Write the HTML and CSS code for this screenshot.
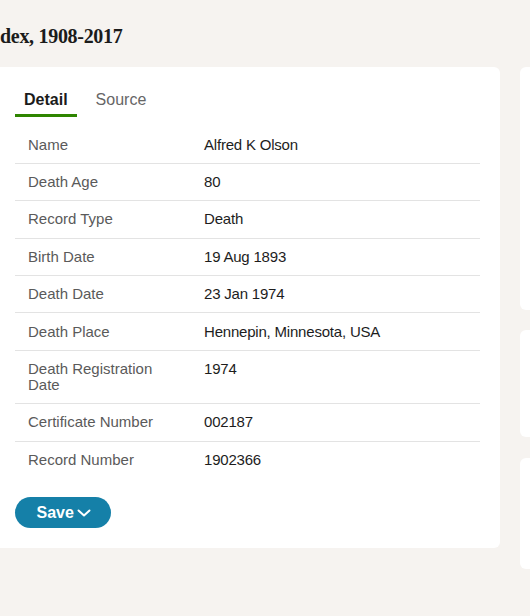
FILE: index.html
```html
<!DOCTYPE html>
<html>
<head>
<meta charset="utf-8">
<link rel="stylesheet" href="styles.css">
</head>
<body>
<header class="head">
  <h1 class="title">dex, 1908-2017</h1>
</header>
<div class="page">
  <main class="card">
    <nav class="tabs">
      <span class="tab active">Detail</span>
      <span class="tab">Source</span>
    </nav>
    <div class="table">
      <div class="row"><div class="label">Name</div><div class="value">Alfred K Olson</div></div>
      <div class="row"><div class="label">Death Age</div><div class="value">80</div></div>
      <div class="row"><div class="label">Record Type</div><div class="value">Death</div></div>
      <div class="row"><div class="label">Birth Date</div><div class="value">19 Aug 1893</div></div>
      <div class="row"><div class="label">Death Date</div><div class="value">23 Jan 1974</div></div>
      <div class="row"><div class="label">Death Place</div><div class="value">Hennepin, Minnesota, USA</div></div>
      <div class="row"><div class="label">Death Registration Date</div><div class="value">1974</div></div>
      <div class="row"><div class="label">Certificate Number</div><div class="value">002187</div></div>
      <div class="row"><div class="label">Record Number</div><div class="value">1902366</div></div>
    </div>
    <button class="save">Save<svg class="chev" width="14" height="8" viewBox="0 0 14 8"><path d="M1.5 1.5 L7 6.5 L12.5 1.5" fill="none" stroke="#fff" stroke-width="2" stroke-linecap="round" stroke-linejoin="round"/></svg></button>
  </main>
  <aside class="side">
    <div class="scard s1"></div>
    <div class="scard s2"></div>
    <div class="scard s3"></div>
  </aside>
</div>
<footer class="foot"></footer>
</body>
</html>
```
FILE: styles.css
```css
html, body {
  margin: 0;
  padding: 0;
  overflow: hidden;
  height: 616px;
}
body {
  background: #f6f3f0;
  font-family: "Liberation Sans", Arial, sans-serif;
  color: #1d1d1d;
}
.head {
  height: 67px;
  box-sizing: border-box;
  padding-top: 24px;
}
.title {
  margin: 0;
  font-family: "Liberation Serif", "Times New Roman", serif;
  font-weight: bold;
  font-size: 20px;
  line-height: 24px;
  letter-spacing: -0.3px;
  color: #1b1b1b;
}
.page {
  display: flex;
  gap: 20px;
  margin-left: -20px;
  align-items: flex-start;
  width: 800px;
}
.card {
  flex: 0 0 520px;
  box-sizing: border-box;
  background: #fff;
  border-radius: 6px;
  padding: 22.5px 20px 20px 35px;
}
.tabs {
  display: flex;
  gap: 10px;
}
.tab {
  font-size: 16px;
  line-height: 20px;
  padding: 0 9px 4.5px;
  border-bottom: 3px solid transparent;
  color: #666;
}
.tab.active {
  font-weight: bold;
  color: #1b1b1b;
  border-bottom-color: #2e8500;
}
.table {
  margin-top: 9.5px;
}
.row {
  display: grid;
  grid-template-columns: 189px 1fr;
  padding: 10.2px 0;
  border-bottom: 1px solid #e3e3e3;
  font-size: 15px;
  line-height: 16px;
}
.row:last-child {
  border-bottom: none;
}
.label {
  padding-left: 13px;
  padding-right: 20px;
  color: #5a5a5a;
}
.value {
  color: #1d1d1d;
  letter-spacing: -0.2px;
}
.save {
  margin-top: 19.5px;
  display: inline-flex;
  align-items: center;
  height: 31px;
  padding: 0 20px 0 21.5px;
  border: none;
  border-radius: 16px;
  background: #1580a8;
  color: #fff;
  font-family: "Liberation Sans", Arial, sans-serif;
  font-weight: bold;
  font-size: 16px;
}
.chev {
  margin-left: 3px;
  margin-top: 1px;
}
.side {
  flex: 0 0 200px;
  display: flex;
  flex-direction: column;
  gap: 20px;
}
.scard {
  background: #fff;
  border-radius: 6px;
}
.s1 { height: 243px; }
.s2 { height: 107px; }
.s3 { height: 111px; margin-top: 1px; }
.foot {
  margin-top: 62px;
  height: 10px;
  border-top: 1px solid #d9d4cf;
  background: #ece9e5;
}
```
